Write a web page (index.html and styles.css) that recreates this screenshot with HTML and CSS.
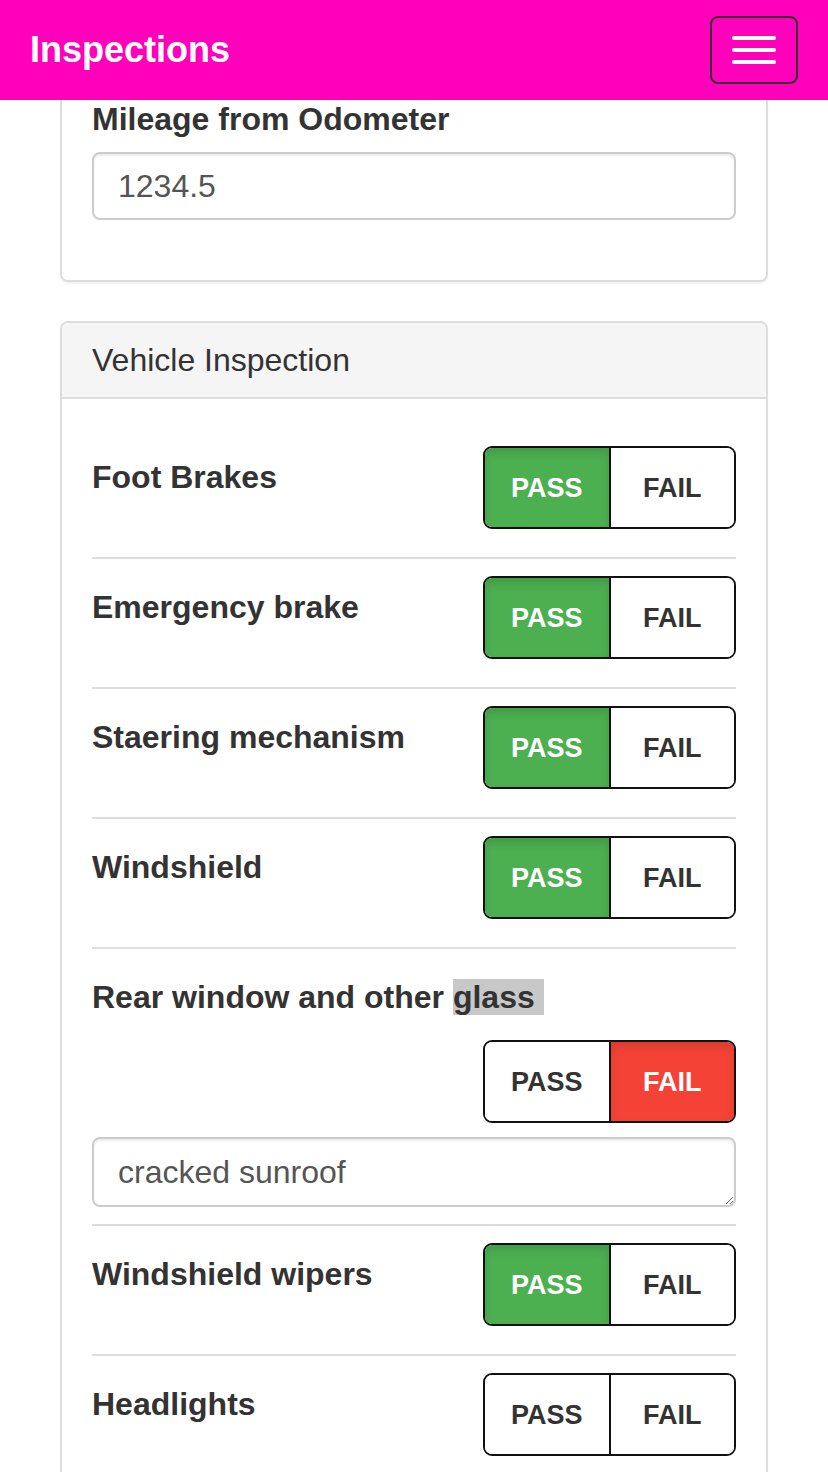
FILE: index.html
```html
<!DOCTYPE html>
<html lang="en">
<head>
<meta charset="utf-8">
<title>Inspections</title>
<link rel="stylesheet" href="styles.css">
</head>
<body>
<nav class="navbar">
  <span class="navbar__brand">Inspections</span>
  <button class="navbar__toggle" type="button" aria-label="Toggle navigation">
    <span class="navbar__bar"></span>
    <span class="navbar__bar"></span>
    <span class="navbar__bar"></span>
  </button>
</nav>

<main class="page">
  <section class="panel">
    <div class="panel__body">
      <div class="form-group">
        <label class="form-label" for="mileage">Mileage from Odometer</label>
        <input class="form-input" id="mileage" type="text" value="1234.5">
      </div>
    </div>
  </section>

  <section class="panel">
    <div class="panel__heading">Vehicle Inspection</div>
    <div class="panel__body">
      <div class="check">
        <span class="check__label">Foot Brakes</span>
        <div class="toggle"><span class="toggle__btn toggle__btn--pass">PASS</span><span class="toggle__btn">FAIL</span></div>
      </div>
      <div class="check">
        <span class="check__label">Emergency brake</span>
        <div class="toggle"><span class="toggle__btn toggle__btn--pass">PASS</span><span class="toggle__btn">FAIL</span></div>
      </div>
      <div class="check">
        <span class="check__label">Staering mechanism</span>
        <div class="toggle"><span class="toggle__btn toggle__btn--pass">PASS</span><span class="toggle__btn">FAIL</span></div>
      </div>
      <div class="check">
        <span class="check__label">Windshield</span>
        <div class="toggle"><span class="toggle__btn toggle__btn--pass">PASS</span><span class="toggle__btn">FAIL</span></div>
      </div>
      <div class="check check--stacked">
        <span class="check__label">Rear window and other <span class="selected">glass&nbsp;</span></span>
        <div class="toggle"><span class="toggle__btn">PASS</span><span class="toggle__btn toggle__btn--fail">FAIL</span></div>
        <textarea class="check__notes">cracked sunroof</textarea>
      </div>
      <div class="check">
        <span class="check__label">Windshield wipers</span>
        <div class="toggle"><span class="toggle__btn toggle__btn--pass">PASS</span><span class="toggle__btn">FAIL</span></div>
      </div>
      <div class="check">
        <span class="check__label">Headlights</span>
        <div class="toggle"><span class="toggle__btn">PASS</span><span class="toggle__btn">FAIL</span></div>
      </div>
    </div>
  </section>
</main>
</body>
</html>
```

FILE: styles.css
```css
* {
  box-sizing: border-box;
}

html, body {
  margin: 0;
  padding: 0;
  background: #fff;
}

body {
  font-family: "Liberation Sans", Arial, Helvetica, sans-serif;
  font-size: 32px;
  line-height: 46px;
  color: #333;
}

/* Navbar (fixed, overlays scrolled content) */
.navbar {
  position: fixed;
  top: 0;
  left: 0;
  right: 0;
  height: 100px;
  background: #ff00bb;
  display: flex;
  align-items: flex-start;
  justify-content: space-between;
  padding: 0 30px;
  z-index: 10;
}

.navbar__brand {
  font-size: 36px;
  font-weight: bold;
  color: #fff;
  line-height: 100px;
}

.navbar__toggle {
  margin-top: 16px;
  width: 88px;
  height: 68px;
  padding: 18px 20px;
  background: transparent;
  border: 2px solid #333;
  border-radius: 8px;
  display: flex;
  flex-direction: column;
  gap: 8px;
}

.navbar__bar {
  display: block;
  width: 44px;
  height: 4px;
  border-radius: 2px;
  background: #fff;
}

/* Page */
.page {
  padding: 64px 60px 0;
}

.panel {
  border: 2px solid #ddd;
  border-radius: 8px;
  background: #fff;
  box-shadow: 0 2px 2px rgba(0, 0, 0, 0.05);
  margin-bottom: 39px;
}

.panel__heading {
  background: #f5f5f5;
  border-bottom: 2px solid #ddd;
  border-radius: 6px 6px 0 0;
  padding: 20px 30px;
  line-height: 34px;
  font-size: 32px;
  color: #333;
}

.panel__body {
  padding: 30px;
}

.form-group {
  margin-bottom: 30px;
}

.form-label {
  display: block;
  font-weight: bold;
  margin-bottom: 10px;
}

.form-input {
  display: block;
  width: 100%;
  height: 68px;
  padding: 0 24px;
  font-family: inherit;
  font-size: 32px;
  color: #555;
  background: #fff;
  border: 2px solid #ccc;
  border-radius: 8px;
  box-shadow: inset 0 2px 2px rgba(0, 0, 0, 0.075);
}

/* Inspection rows */
.check {
  display: flex;
  justify-content: space-between;
  align-items: flex-start;
  padding: 17px 0;
  border-bottom: 2px solid #ddd;
}

.check__label {
  margin-top: 8px;
  font-weight: bold;
  line-height: 46px;
}

.selected {
  background: #c8c8c8;
}

.toggle {
  flex: none;
  display: flex;
  width: 253px;
  height: 83px;
  margin-bottom: 11px;
  border: 2px solid #111;
  border-radius: 9px;
  overflow: hidden;
}

.toggle__btn {
  flex: 1;
  display: flex;
  align-items: center;
  justify-content: center;
  font-size: 27px;
  font-weight: bold;
  color: #333;
  background: #fff;
}

.toggle__btn + .toggle__btn {
  border-left: 2px solid #111;
}

.toggle__btn--pass {
  background: #4caf50;
  color: #fff;
  box-shadow: inset 0 5px 8px rgba(0, 0, 0, 0.12);
}

.toggle__btn--fail {
  background: #f44336;
  color: #fff;
  box-shadow: inset 0 5px 8px rgba(0, 0, 0, 0.12);
}

.check--stacked {
  flex-direction: column;
  align-items: stretch;
}

.check--stacked .toggle {
  align-self: flex-end;
  margin-top: 20px;
}

.check__notes {
  display: block;
  width: 100%;
  height: 70px;
  margin: 3px 0 0;
  padding: 10px 24px;
  font-family: inherit;
  font-size: 32px;
  line-height: 46px;
  color: #555;
  background: #fff;
  border: 2px solid #ccc;
  border-radius: 8px;
  box-shadow: inset 0 2px 2px rgba(0, 0, 0, 0.075);
  overflow: hidden;
}
```
